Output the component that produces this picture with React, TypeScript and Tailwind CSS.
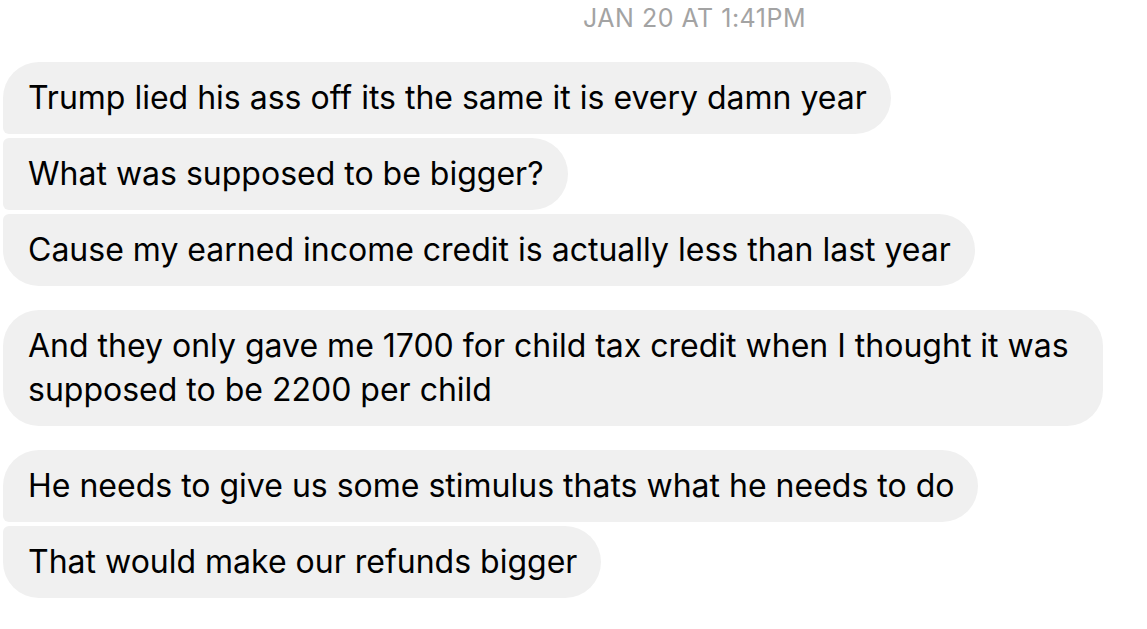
import React from "react";

type B = { text: React.ReactNode; r: string; pr?: string };

const Bubble = ({ text, r, pr = "pr-[24px]" }: B) => (
  <div className="flex">
    <div
      className={`bg-[#f0f0f0] text-black text-[32px] leading-[44px] pl-[25px] py-[14px] ${pr} ${r}`}
    >
      {text}
    </div>
  </div>
);

export default function App() {
  return (
    <div
      className="w-[1147px] h-[629px] bg-white overflow-hidden pl-[3px]"
      style={{ fontFamily: "Inter, 'Noto Sans', sans-serif" }}
    >
      <div className="pl-[580px] pt-[4px] h-[62px] text-[#a3a3a3] text-[25px] leading-[28px] tracking-[0.5px]">
        JAN 20 AT 1:41PM
      </div>
      <div className="flex flex-col gap-[4px]">
        <Bubble
          text="Trump lied his ass off its the same it is every damn year"
          r="rounded-tl-[36px] rounded-bl-[6px] rounded-r-[36px]"
        />
        <Bubble
          text="What was supposed to be bigger?"
          r="rounded-l-[6px] rounded-r-[36px]"
        />
        <Bubble
          text="Cause my earned income credit is actually less than last year"
          r="rounded-tl-[6px] rounded-bl-[36px] rounded-r-[36px]"
        />
      </div>
      <div className="mt-[24px]">
        <Bubble
          text={
            <>
              And they only gave me 1700 for child tax credit when I thought it was
              <br />
              supposed to be 2200 per child
            </>
          }
          pr="pr-[34px]"
          r="rounded-[36px]"
        />
      </div>
      <div className="mt-[24px] flex flex-col gap-[4px]">
        <Bubble
          text="He needs to give us some stimulus thats what he needs to do"
          r="rounded-tl-[36px] rounded-bl-[6px] rounded-r-[36px]"
        />
        <Bubble
          text="That would make our refunds bigger"
          r="rounded-tl-[6px] rounded-bl-[36px] rounded-r-[36px]"
        />
      </div>
    </div>
  );
}
